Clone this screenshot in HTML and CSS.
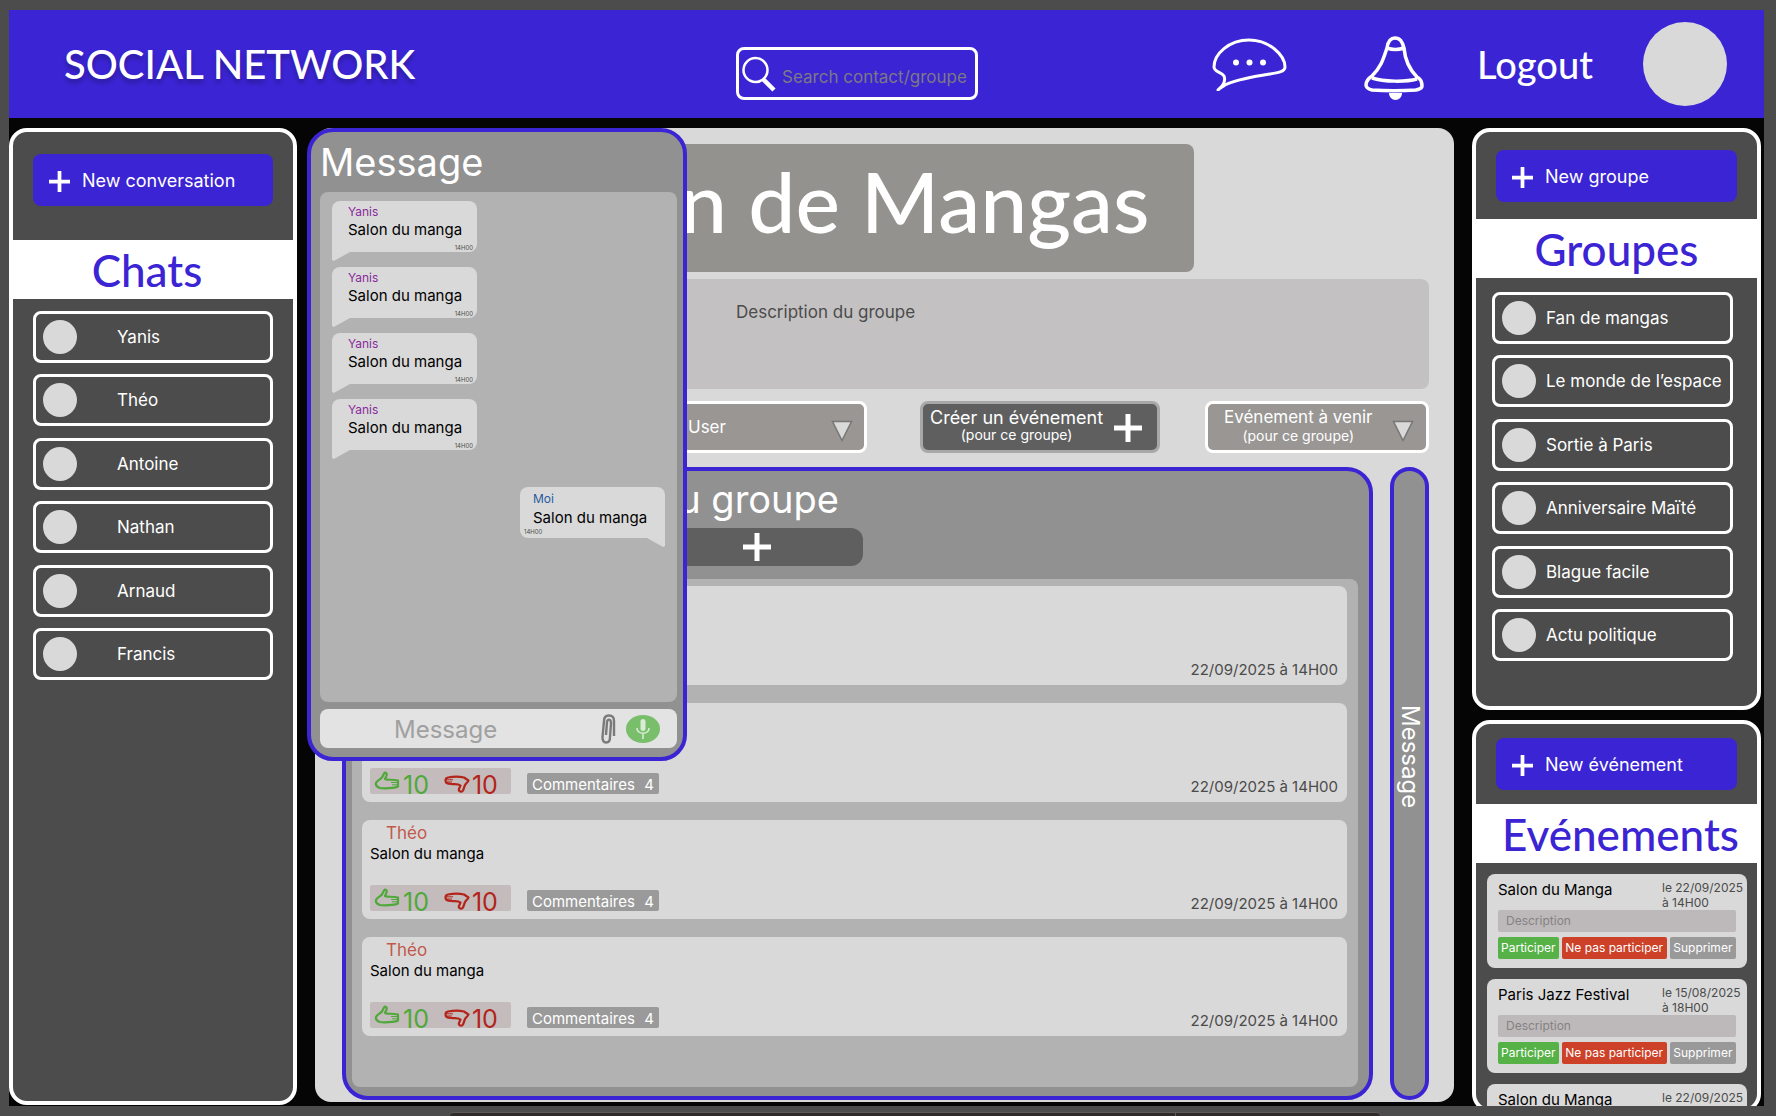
FILE: index.html
```html
<!DOCTYPE html>
<html lang="fr">
<head>
<meta charset="utf-8">
<meta name="viewport" content="width=device-width, initial-scale=1">
<title>Social Network</title>
<link rel="stylesheet" href="styles.css">
</head>
<body>
<svg class="sprite" aria-hidden="true">
  <symbol id="plus" viewBox="0 0 28 28"><path d="M14 0v28M0 14h28" fill="none" stroke="currentColor" stroke-width="5"/></symbol>
  <symbol id="triangle" viewBox="0 0 22 22"><path d="M1.500 1.500h19L11 20.500z" fill="#d9d9d9" stroke="#777" stroke-width="1.500"/></symbol>
  <symbol id="like" viewBox="0 0 28 22"><path d="M2 12C3 9.500 6.500 8.500 8 6.500L10 2.500C11 1 13.500 2 12.500 4.500L11 8C14 9.500 18 8 24 9.500V15.500C20 17.500 9 17.500 6 17C3 16 1.500 14.500 2 12Z" fill="none" stroke="currentColor" stroke-width="2.200" stroke-linejoin="round"/><path d="M17 11.500h7M18 13.800h6" stroke="currentColor" stroke-width="1"/></symbol>
  <symbol id="dislike" viewBox="0 0 28 22"><path d="M5 6.500C10 5.500 17 5.500 21 6.500L25.500 9.500C25 11 22.500 13 22 14L20 19.500C19 21.500 15 20.500 16 18L17.500 14.500C15 12.500 12 13.500 8 13C4 12.500 2.500 12 2.500 9.500Q2.500 7 5 6.500Z" fill="none" stroke="currentColor" stroke-width="2.200" stroke-linejoin="round"/><path d="M3 8.800h7M3 11h6" stroke="currentColor" stroke-width="1"/></symbol>
</svg>

<div class="app">
  <header class="topbar">
    <h1 class="brand">SOCIAL NETWORK</h1>
    <label class="search">
      <svg class="search-icon" viewBox="0 0 36 36" aria-hidden="true"><circle cx="13.500" cy="14" r="12" fill="none" stroke="#fff" stroke-width="2.500"/><path d="M21.500 23.500L32 34" stroke="#fff" stroke-width="4.500"/></svg>
      <input class="search-input" type="text" placeholder="Search contact/groupe" aria-label="Search contact/groupe">
    </label>
    <nav class="actions">
      <button class="icon-button" type="button" aria-label="Messages">
        <svg class="icon-chat" viewBox="0 0 75 53" aria-hidden="true"><path d="M2 29C2 16 17 2 37 2C57 2 73 17 73 29C73 34 65 35 55 36.500C40 39 25 41 13 47C10 49 8 50 6 52C12 47 14 43 12 38C10 34 2 34 2 29Z" fill="none" stroke="#fff" stroke-width="3" stroke-linejoin="round"/><g fill="#fff"><circle cx="24" cy="24.500" r="3"/><circle cx="37.500" cy="24.500" r="3"/><circle cx="51" cy="24.500" r="3"/></g></svg>
      </button>
      <button class="icon-button icon-button-bell" type="button" aria-label="Notifications">
        <svg class="icon-bell" viewBox="0 0 60 64" aria-hidden="true"><path d="M23 12C24 5 27 2 31 2C36 2 38 5 40 12C41 24 45 33 53 41C57 43 58 47 58 50C58 53 55 53 52 54C38 55 22 55 8 54C4 53 2 52 2 49C2 45 5 42 8 40C17 31 19 24 23 12ZM23 12Q31 15 40 12M8 42C20 46 42 46 53 43" fill="none" stroke="#fff" stroke-width="3.500"/><path d="M25 57H38C38 61 35 64 31.500 64C28 64 25 61 25 57Z" fill="#fff"/></svg>
      </button>
      <a class="logout" href="#">Logout</a>
      <span class="avatar avatar-large"></span>
    </nav>
  </header>

  <div class="columns">
    <aside class="panel panel-chats">
      <button class="new-button" type="button"><svg class="plus-small"><use href="#plus"/></svg>New conversation</button>
      <h2 class="band">Chats</h2>
      <ul class="entries entries-wide">
        <li><a class="entry" href="#"><span class="avatar"></span>Yanis</a></li>
        <li><a class="entry" href="#"><span class="avatar"></span>Théo</a></li>
        <li><a class="entry" href="#"><span class="avatar"></span>Antoine</a></li>
        <li><a class="entry" href="#"><span class="avatar"></span>Nathan</a></li>
        <li><a class="entry" href="#"><span class="avatar"></span>Arnaud</a></li>
        <li><a class="entry" href="#"><span class="avatar"></span>Francis</a></li>
      </ul>
    </aside>

    <main class="group">
      <h2 class="group-title">Fan de Mangas</h2>
      <p class="group-description">Description du groupe</p>
      <div class="toolbar">
        <div class="picker">
          <select class="picker-select" aria-label="User"><option>User</option></select>
          <svg class="picker-arrow" aria-hidden="true"><use href="#triangle"/></svg>
        </div>
        <button class="tool-button tool-create" type="button">
          <span class="tool-label">Créer un événement<small>(pour ce groupe)</small></span>
          <svg class="plus-large"><use href="#plus"/></svg>
        </button>
        <button class="tool-button tool-upcoming" type="button" aria-haspopup="listbox">
          <span class="tool-label">Evénement à venir<small>(pour ce groupe)</small></span>
          <svg class="picker-arrow" aria-hidden="true"><use href="#triangle"/></svg>
        </button>
      </div>

      <div class="boards">
        <section class="board">
          <div class="board-head">
            <h3 class="board-title">Fil du groupe</h3>
            <button class="board-add" type="button" aria-label="Ajouter"><svg class="plus-large"><use href="#plus"/></svg></button>
          </div>
          <div class="feed">
            <article class="post">
              <h4 class="post-author">Théo</h4><p class="post-text">Salon du manga</p>
              <footer class="post-footer">
                <div class="votes"><button class="vote vote-up" type="button"><svg class="thumb"><use href="#like"/></svg>10</button><button class="vote vote-down" type="button"><svg class="thumb"><use href="#dislike"/></svg>10</button></div>
                <button class="comments" type="button"><span>Commentaires</span><span>4</span></button>
                <time class="post-date">22/09/2025 à 14H00</time>
              </footer>
            </article>
            <article class="post">
              <h4 class="post-author">Théo</h4><p class="post-text">Salon du manga</p>
              <footer class="post-footer">
                <div class="votes"><button class="vote vote-up" type="button"><svg class="thumb"><use href="#like"/></svg>10</button><button class="vote vote-down" type="button"><svg class="thumb"><use href="#dislike"/></svg>10</button></div>
                <button class="comments" type="button"><span>Commentaires</span><span>4</span></button>
                <time class="post-date">22/09/2025 à 14H00</time>
              </footer>
            </article>
            <article class="post">
              <h4 class="post-author">Théo</h4><p class="post-text">Salon du manga</p>
              <footer class="post-footer">
                <div class="votes"><button class="vote vote-up" type="button"><svg class="thumb"><use href="#like"/></svg>10</button><button class="vote vote-down" type="button"><svg class="thumb"><use href="#dislike"/></svg>10</button></div>
                <button class="comments" type="button"><span>Commentaires</span><span>4</span></button>
                <time class="post-date">22/09/2025 à 14H00</time>
              </footer>
            </article>
            <article class="post">
              <h4 class="post-author">Théo</h4><p class="post-text">Salon du manga</p>
              <footer class="post-footer">
                <div class="votes"><button class="vote vote-up" type="button"><svg class="thumb"><use href="#like"/></svg>10</button><button class="vote vote-down" type="button"><svg class="thumb"><use href="#dislike"/></svg>10</button></div>
                <button class="comments" type="button"><span>Commentaires</span><span>4</span></button>
                <time class="post-date">22/09/2025 à 14H00</time>
              </footer>
            </article>
          </div>
        </section>
        <button class="side-tab" type="button">Message</button>
      </div>

      <section class="chat" aria-label="Conversation">
        <h3 class="chat-title">Message</h3>
        <div class="thread">
          <div class="bubble"><b class="bubble-author">Yanis</b><p class="bubble-text">Salon du manga</p><time class="bubble-time">14H00</time></div>
          <div class="bubble"><b class="bubble-author">Yanis</b><p class="bubble-text">Salon du manga</p><time class="bubble-time">14H00</time></div>
          <div class="bubble"><b class="bubble-author">Yanis</b><p class="bubble-text">Salon du manga</p><time class="bubble-time">14H00</time></div>
          <div class="bubble"><b class="bubble-author">Yanis</b><p class="bubble-text">Salon du manga</p><time class="bubble-time">14H00</time></div>
          <div class="bubble bubble-own"><b class="bubble-author">Moi</b><p class="bubble-text">Salon du manga</p><time class="bubble-time">14H00</time></div>
        </div>
        <form class="composer">
          <input class="composer-input" type="text" placeholder="Message" aria-label="Message">
          <button class="icon-button" type="button" aria-label="Joindre un fichier"><svg class="icon-clip" viewBox="0 0 15 30" aria-hidden="true"><path d="M13 22L13 7C13 3 11 1.500 8 1.500C4.500 1.500 3 3 3 7L1.500 23C1.500 27 3 28.500 5 28.500C8 28.500 9 27 9 23L10 9C10 5 6.500 4.500 6 8L5 21" fill="none" stroke="#7c797a" stroke-width="2.400"/></svg></button>
          <button class="mic" type="button" aria-label="Message vocal"><svg class="icon-mic" viewBox="0 0 14 20" aria-hidden="true"><rect x="4.500" y="0" width="5" height="12" rx="2.500" fill="#d9ecd5"/><path d="M1 9C1 16 13 16 13 9M7 14V20" fill="none" stroke="#d9ecd5" stroke-width="1.600"/></svg></button>
        </form>
      </section>
    </main>

    <div class="right">
      <aside class="panel panel-groups">
        <button class="new-button" type="button"><svg class="plus-small"><use href="#plus"/></svg>New groupe</button>
        <h2 class="band">Groupes</h2>
        <ul class="entries">
          <li><a class="entry" href="#"><span class="avatar"></span>Fan de mangas</a></li>
          <li><a class="entry" href="#"><span class="avatar"></span>Le monde de l’espace</a></li>
          <li><a class="entry" href="#"><span class="avatar"></span>Sortie à Paris</a></li>
          <li><a class="entry" href="#"><span class="avatar"></span>Anniversaire Maïté</a></li>
          <li><a class="entry" href="#"><span class="avatar"></span>Blague facile</a></li>
          <li><a class="entry" href="#"><span class="avatar"></span>Actu politique</a></li>
        </ul>
      </aside>

      <aside class="panel panel-events">
        <button class="new-button" type="button"><svg class="plus-small"><use href="#plus"/></svg>New événement</button>
        <h2 class="band">Evénements</h2>
        <div class="events">
          <article class="event">
            <header class="event-head"><h3 class="event-title">Salon du Manga</h3><time class="event-date">le 22/09/2025<br>à 14H00</time></header>
            <p class="event-text">Description</p>
            <div class="event-actions"><button class="join" type="button">Participer</button><button class="decline" type="button">Ne pas participer</button><button class="remove" type="button">Supprimer</button></div>
          </article>
          <article class="event">
            <header class="event-head"><h3 class="event-title">Paris Jazz Festival</h3><time class="event-date">le 15/08/2025<br>à 18H00</time></header>
            <p class="event-text">Description</p>
            <div class="event-actions"><button class="join" type="button">Participer</button><button class="decline" type="button">Ne pas participer</button><button class="remove" type="button">Supprimer</button></div>
          </article>
          <article class="event">
            <header class="event-head"><h3 class="event-title">Salon du Manga</h3><time class="event-date">le 22/09/2025<br>à 14H00</time></header>
            <p class="event-text">Description</p>
            <div class="event-actions"><button class="join" type="button">Participer</button><button class="decline" type="button">Ne pas participer</button><button class="remove" type="button">Supprimer</button></div>
          </article>
        </div>
      </aside>
    </div>
  </div>
</div>
<div class="dock"><div class="dock-bar"><span class="dock-main"></span><span class="dock-end"></span></div></div>
</body>
</html>
```
FILE: styles.css
```css
:root {
  --blue: #3b24d3;
  --dark: #4c4c4c;
  --light: #d9d9d9;
  --mid: #b2b2b2;
  --grey: #919191;
  --title: Futura, Lato, sans-serif;
}

* { box-sizing: border-box; }

body {
  margin: 0;
  height: 100vh;
  display: flex;
  flex-direction: column;
  overflow: hidden;
  background: var(--dark);
  color: #000;
  font: 400 17px/20px Inter, sans-serif;
}

h1, h2, h3, h4, p, ul { margin: 0; padding: 0; font-weight: 400; }
ul { list-style: none; }
a { color: inherit; text-decoration: none; }
button, input, select { font: inherit; color: inherit; margin: 0; padding: 0; border: 0; background: none; }
button { cursor: pointer; }
svg { display: block; flex: none; }
.sprite { position: absolute; width: 0; height: 0; }

.app {
  flex: 1;
  min-height: 0;
  display: flex;
  flex-direction: column;
  margin: 10px 12px 0 9px;
  background: #050505;
  overflow: hidden;
}

/* Top bar */
.topbar {
  display: flex;
  align-items: center;
  height: 108px;
  flex: none;
  padding: 0 37px 0 55px;
  background: var(--blue);
  color: #fff;
}
.brand {
  flex: 1;
  font: 500 40px/48px var(--title);
  text-shadow: 0 4px 4px rgba(0, 0, 0, .25);
}
.search {
  display: flex;
  align-items: center;
  width: 242px;
  height: 53px;
  margin: 19px 234px 0 0;
  padding: 0 2px 0 3px;
  gap: 4px;
  border: 3px solid #fff;
  border-radius: 8px;
}
.search-icon { width: 36px; height: 36px; }
.search-input { flex: 1; min-width: 0; height: 46px; padding-top: 6px; outline: 0; }
.search-input::placeholder { color: #7b7986; opacity: 1; }
.actions { display: flex; align-items: center; }
.icon-chat { width: 75px; height: 53px; }
.icon-bell { width: 60px; height: 64px; }
.icon-button-bell { margin: 8px 53px 0 77px; }
.logout { font: 500 38px/48px var(--title); }
.avatar { flex: none; width: 34px; height: 34px; border-radius: 50%; background: var(--light); }
.avatar-large { width: 84px; height: 84px; margin-left: 50px; }

/* Columns */
.columns {
  flex: 1;
  min-height: 0;
  display: grid;
  grid-template-columns: 288px minmax(0, 1fr) 289px;
  gap: 18px;
  padding: 10px 3px 0 0;
}
.panel {
  display: flex;
  flex-direction: column;
  border: 4px solid #fff;
  border-radius: 18px;
  background: var(--dark);
  color: #fff;
  overflow: hidden;
}
.panel-chats { padding-top: 22px; margin-bottom: 1px; }
.panel-groups { padding: 18px 0 45px; }
.panel-events { flex: 1; min-height: 0; padding-top: 14px; margin-bottom: -6px; }
.right { display: flex; flex-direction: column; gap: 10px; min-height: 0; }

.new-button {
  display: flex;
  align-items: center;
  flex: none;
  gap: 12px;
  height: 52px;
  margin: 0 20px;
  padding: 2px 0 0 16px;
  border-radius: 8px;
  background: var(--blue);
  font-size: 18px;
}
.plus-small { width: 21px; height: 21px; }
.plus-large { width: 28px; height: 28px; }
.band {
  flex: none;
  margin: 17px 0 14px;
  padding-top: 2px;
  background: #fff;
  color: var(--blue);
  font: 500 44px/57px var(--title);
  text-align: center;
}
.panel-chats .band { margin: 34px 0 12px; padding-right: 12px; }
.panel-events .band { margin: 14px 0 11px; padding-left: 8px; }

.entries {
  display: flex;
  flex-direction: column;
  justify-content: space-between;
  min-height: 369px;
  margin: 0 24px 0 16px;
}
.entries-wide { margin: 0 20px; }
.entry {
  display: flex;
  align-items: center;
  gap: 10px;
  height: 52px;
  padding-left: 7px;
  border: 3px solid #fff;
  border-radius: 8px;
  white-space: nowrap;
}
.entries-wide .entry { gap: 40px; }

/* Group page */
.group {
  position: relative;
  display: flex;
  flex-direction: column;
  min-height: 0;
  margin-bottom: 4px;
  padding: 16px 25px 2px 27px;
  border-radius: 16px;
  background: var(--light);
}
.group-title {
  align-self: center;
  width: 616px;
  height: 128px;
  padding: 0 44px 14px 0;
  border-radius: 8px;
  background: #94928f;
  color: #fff;
  font: 500 84px/114px var(--title);
  text-align: right;
  white-space: nowrap;
}
.group-description {
  height: 110px;
  margin: 7px 0 12px;
  padding: 23px 0 0 394px;
  border-radius: 8px;
  background: #c4c1c2;
  color: #4b4b4b;
}
.toolbar { display: flex; justify-content: flex-end; color: #fff; }
.picker, .tool-button {
  display: flex;
  align-items: center;
  height: 52px;
  border: 3px solid #fff;
  border-radius: 8px;
  background: #999694;
}
.picker { width: 242px; padding-right: 11px; }
.picker-select { flex: 1; height: 46px; padding-left: 60px; appearance: none; outline: 0; }
.picker-arrow { width: 22px; height: 22px; margin-top: 7px; }
.tool-create {
  width: 240px;
  margin: 0 45px 0 53px;
  padding: 0 15px 3px 7px;
  justify-content: space-between;
  border-color: #a8a8a8;
  background: #5f5f5f;
  font-size: 18px;
}
.tool-create .plus-large { margin-top: 4px; }
.tool-upcoming { width: 224px; padding: 0 12px 0 16px; justify-content: space-between; }
.tool-label { line-height: 18px; text-align: center; white-space: nowrap; }
.tool-label small { display: block; font-size: 14px; line-height: 15px; }
.tool-upcoming small { line-height: 20px; }

.boards { flex: 1; min-height: 0; display: flex; gap: 17px; margin-top: 14px; }
.board {
  flex: 1;
  display: flex;
  flex-direction: column;
  min-width: 0;
  padding: 0 11px 9px 6px;
  border: 4px solid var(--blue);
  border-radius: 26px;
  background: var(--grey);
}
.board-head { display: flex; flex-direction: column; align-items: flex-end; width: 511px; color: #fff; }
.board-title { padding-right: 24px; font-size: 38px; line-height: 57px; white-space: nowrap; }
.board-add {
  display: grid;
  place-items: center;
  width: 212px;
  height: 38px;
  margin-bottom: 13px;
  border-radius: 12px;
  background: #5f5f5f;
}
.feed {
  flex: 1;
  min-height: 0;
  display: flex;
  flex-direction: column;
  gap: 18px;
  padding: 7px 11px 0 10px;
  border-radius: 8px;
  background: var(--mid);
}
.post {
  display: flex;
  flex-direction: column;
  min-height: 99px;
  padding: 3px 9px 8px 8px;
  border-radius: 8px;
  background: var(--light);
}
.post-author { padding-left: 16px; color: #c0594c; font-size: 17px; }
.post-text { font-size: 15px; line-height: 22px; }
.post-footer { display: flex; align-items: flex-end; margin-top: auto; font-size: 15px; }
.votes {
  display: flex;
  align-items: flex-start;
  gap: 14px;
  width: 141px;
  height: 26px;
  padding-left: 4px;
  border-radius: 2px;
  background: #c4bcbc;
}
.vote { display: flex; gap: 1px; height: 26px; font-size: 25px; line-height: 34px; align-items: flex-start; }
.vote-up { color: #4fa83a; }
.vote-down { color: #b3241a; }
.thumb { width: 28px; height: 22px; margin-top: 3px; }
.comments {
  display: flex;
  justify-content: space-between;
  width: 132px;
  height: 21px;
  margin-left: 16px;
  padding: 2px 5px 0;
  border-radius: 2px;
  background: #9a9a9a;
  color: #fff;
}
.post-date { margin-left: auto; color: #4b4b4b; line-height: 14px; }
.side-tab {
  width: 39px;
  border: 4px solid var(--blue);
  border-radius: 20px;
  background: var(--grey);
  color: #fff;
  font-size: 24px;
  line-height: 30px;
  writing-mode: vertical-rl;
  padding-bottom: 54px;
}

/* Floating conversation, laid over the group page */
.chat {
  position: absolute;
  top: 0;
  left: -8px;
  width: 380px;
  padding: 0 6px 9px 9px;
  border: 4px solid var(--blue);
  border-radius: 26px;
  background: var(--grey);
}
.chat-title { color: #fff; font-size: 38px; line-height: 60px; }
.thread {
  display: flex;
  flex-direction: column;
  align-items: flex-start;
  gap: 15px;
  min-height: 510px;
  padding: 9px 12px;
  border-radius: 8px;
  background: var(--mid);
}
.bubble {
  position: relative;
  display: flex;
  flex-direction: column;
  width: 145px;
  height: 51px;
  padding: 3px 4px 0 16px;
  border-radius: 8px 8px 8px 0;
  background: var(--light);
}
.bubble::after {
  content: "";
  position: absolute;
  top: 100%;
  left: 0;
  width: 18px;
  height: 9px;
  background: inherit;
  clip-path: polygon(0 0, 100% 0, 10% 100%, 0 90%);
}
.bubble-author { color: #8a2a9b; font-size: 12px; font-weight: 400; line-height: 16px; }
.bubble-text { font-size: 15px; line-height: 20px; white-space: nowrap; }
.bubble-time { align-self: flex-end; margin-top: 4px; color: #4b4b4b; font-size: 6px; line-height: 8px; }
.bubble-own { align-self: flex-end; margin-top: 22px; padding: 3px 4px 0 13px; border-radius: 8px 8px 0 8px; }
.bubble-own::after { left: auto; right: 0; clip-path: polygon(0 0, 100% 0, 100% 90%, 90% 100%); }
.bubble-own .bubble-author { color: #2a5a9f; line-height: 18px; }
.bubble-own .bubble-time { align-self: flex-start; margin: 0 0 0 -9px; }
.composer {
  display: flex;
  align-items: center;
  height: 39px;
  margin-top: 7px;
  padding-right: 17px;
  border-radius: 8px;
  background: #e3e3e3;
}
.composer-input { flex: 1; min-width: 0; height: 39px; padding: 2px 0 0 74px; outline: 0; font-size: 24px; }
.composer-input::placeholder { color: #a0a0a0; opacity: 1; }
.icon-clip { width: 15px; height: 30px; }
.mic {
  display: grid;
  place-items: center;
  width: 34px;
  height: 28px;
  margin-left: 10px;
  border-radius: 50%;
  background: #78be6b;
}
.icon-mic { width: 14px; height: 20px; }

/* Events */
.events { display: flex; flex-direction: column; gap: 11px; padding: 0 10px 0 11px; }
.event {
  flex: none;
  padding: 6px 11px 9px;
  border-radius: 8px;
  background: var(--light);
  color: #000;
  font-size: 12px;
}
.event-head { display: flex; justify-content: space-between; margin-right: -8px; }
.event-title { font-size: 15px; }
.event-date { width: 82px; color: #4b4b4b; line-height: 15px; white-space: nowrap; }
.event-text {
  height: 22px;
  padding-left: 8px;
  border-radius: 2px;
  background: #bdb9ba;
  color: #858283;
  line-height: 22px;
}
.event-actions { display: flex; gap: 3px; margin-top: 5px; color: #fff; }
.event-actions button { height: 22px; padding: 0 2px; border-radius: 2px; white-space: nowrap; }
.event-actions .join { flex: 60; background: #56b146; }
.event-actions .decline { flex: 107; background: #cc4128; }
.event-actions .remove { flex: 66; background: #999; }

/* Bottom edge */
.dock { display: flex; justify-content: center; align-items: flex-end; height: 10px; flex: none; padding-left: 54px; }
.dock-bar { display: flex; width: 54%; height: 4px; border-top: 1px solid #5c5a5a; border-radius: 16px 16px 0 0; background: #2f2b2b; }
.dock-main { flex: 78; border-right: 1px solid #5c5a5a; }
.dock-end { flex: 22; }
```
